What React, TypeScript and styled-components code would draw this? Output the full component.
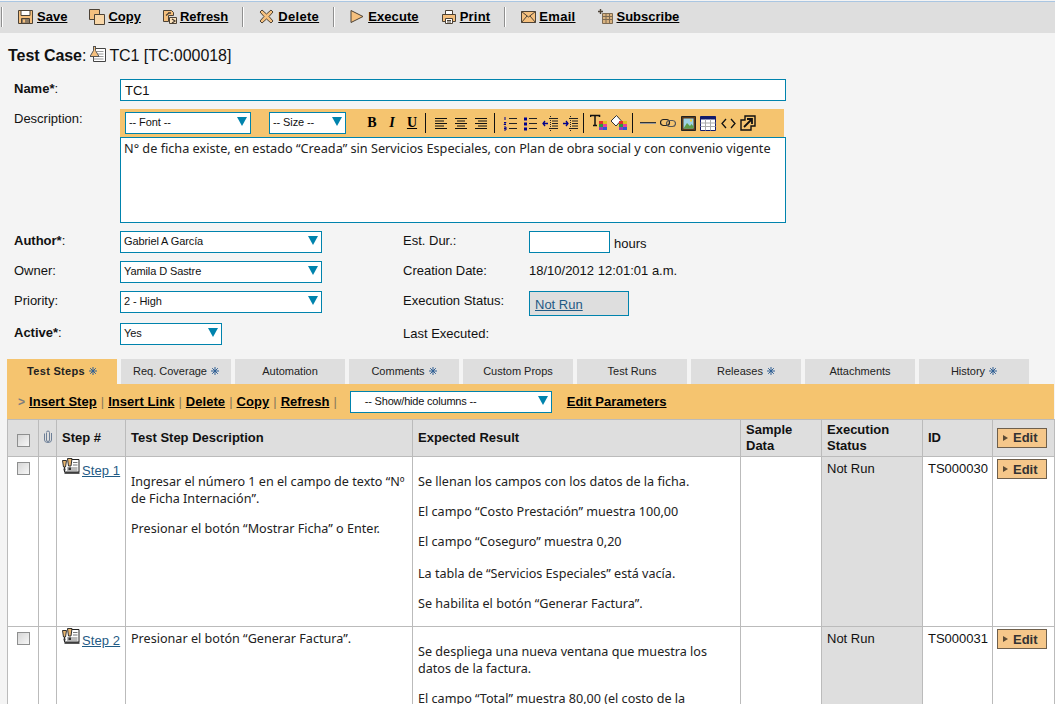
import React from 'react'
import styled, { createGlobalStyle } from 'styled-components'

const GlobalStyle = createGlobalStyle`
  html, body {
    margin: 0;
    padding: 0;
    background: #f4f4f4;
    color: #111;
    font-family: "Liberation Sans", Arial, sans-serif;
    font-size: 13px;
  }
`

const Page = styled.div`
  height: 704px;
  overflow: hidden;
`

const TopBar = styled.div`
  display: flex;
  align-items: center;
  box-sizing: border-box;
  height: 32px;
  margin-top: 1px;
  padding: 0 0 2px 1px;
  border-top: 1px solid #aac6e2;
  background: #dedede;
`

const BarSep = styled.span<{ $first?: boolean }>`
  width: 1px;
  height: 20px;
  margin: ${(p) => (p.$first ? '0 14px 0 0' : '0 15px 0 -8px')};
  background: #8f8f8f;
  border-right: 1px solid #fff;
`

const ToolLink = styled.a<{ $track?: number }>`
  display: flex;
  align-items: center;
  gap: 3px;
  margin-right: 22px;
  color: #000;
  font-size: 13px;
  font-weight: bold;
  letter-spacing: ${(p) => p.$track ?? 0}px;
  span {
    text-decoration: underline;
  }
`

const Title = styled.h1`
  display: flex;
  align-items: center;
  height: 20px;
  margin: 13px 0 13px 8px;
  font-size: 16px;
  font-weight: normal;
  letter-spacing: -0.05px;
  b {
    font-weight: bold;
  }
  svg {
    margin: 0 3px 3px 4px;
  }
`

const NameGrid = styled.div`
  display: grid;
  grid-template-columns: 106px 666px;
  row-gap: 8px;
  margin-left: 14px;
`

const Label = styled.div<{ $top?: number }>`
  padding-top: ${(p) => p.$top ?? 2}px;
  line-height: 15px;
  font-size: 13px;
  b {
    font-weight: bold;
  }
`

const TextInput = styled.input<{ $width?: number }>`
  box-sizing: border-box;
  width: ${(p) => p.$width ?? 666}px;
  height: 22px;
  margin: 0;
  padding: 0 4px;
  border: 1px solid #0083ad;
  border-radius: 0;
  outline: none;
  background: #fff;
  color: #111;
  font-family: "Liberation Sans", Arial, sans-serif;
  font-size: 13px;
`

const EditorBar = styled.div`
  display: flex;
  align-items: center;
  box-sizing: border-box;
  width: 664px;
  height: 28px;
  padding-left: 5px;
  background: #f5c46f;
`

const EditorBox = styled.div`
  box-sizing: border-box;
  width: 666px;
  height: 86px;
  padding: 2px 3px;
  border: 1px solid #0083ad;
  background: #fff;
  color: #222;
  font-family: "Noto Sans", sans-serif;
  font-size: 12.7px;
  line-height: 17px;
`

const SelectBox = styled.div<{ $width: number; $indent?: number }>`
  position: relative;
  box-sizing: border-box;
  flex: none;
  width: ${(p) => p.$width}px;
  height: 22px;
  padding-left: ${(p) => p.$indent ?? 3}px;
  border: 1px solid #0083ad;
  background: #fff;
  color: #111;
  font-size: 11px;
  font-weight: normal;
  letter-spacing: -0.1px;
  line-height: 18px;
  &::after {
    content: '';
    position: absolute;
    right: 3px;
    top: 4px;
    border-style: solid;
    border-width: 9px 5px 0;
    border-color: #0083ad transparent transparent;
  }
`

const EditorSelect = styled(SelectBox)`
  margin-right: 18px;
  &:nth-child(2) {
    margin-right: 16px;
  }
`

const EdButton = styled.span`
  display: flex;
  align-items: center;
  justify-content: center;
  flex: none;
  width: 20px;
  height: 20px;
  color: #000;
  font-family: "Liberation Serif", serif;
  font-size: 14px;
  font-weight: bold;
`

const EdSep = styled.span`
  flex: none;
  width: 1px;
  height: 20px;
  margin: 0 5px 0 3px;
  background: #111;
`

const MetaGrid = styled.div`
  display: grid;
  grid-template-columns: 106px 283px 126px 1fr;
  grid-auto-rows: 22px;
  row-gap: 8px;
  margin: 8px 0 0 14px;
`

const MetaValue = styled.div`
  display: flex;
  align-items: center;
  gap: 4px;
  height: 22px;
`

const DateValue = styled(MetaValue)`
  height: 19px;
`

const HoursText = styled.span`
  padding-top: 2px;
  font-size: 13px;
`

const StatusBox = styled.div`
  box-sizing: border-box;
  width: 100px;
  height: 25px;
  padding: 4px 5px 0;
  border: 1px solid #0083ad;
  background: #dedede;
  line-height: 17px;
`

const ActiveRow = styled.div`
  grid-column: 1 / -1;
  display: grid;
  grid-template-columns: 106px 283px 126px 1fr;
  margin-top: 2px;
`

const DocLink = styled.a`
  color: #1f5a85;
  text-decoration: underline;
`

const Tabs = styled.div`
  display: flex;
  gap: 4px;
  margin: 16px 0 0 7px;
`

const Tab = styled.div<{ $active?: boolean }>`
  display: flex;
  align-items: center;
  justify-content: center;
  gap: 4px;
  box-sizing: border-box;
  width: 110px;
  height: 25px;
  padding-bottom: 2px;
  background: ${(p) => (p.$active ? '#f5c46f' : '#dedede')};
  font-size: 11px;
  font-weight: ${(p) => (p.$active ? 'bold' : 'normal')};
  letter-spacing: ${(p) => (p.$active ? '0.3px' : '0')};
  color: #222;
`

const Panel = styled.div`
  margin: 0 1px 0 7px;
`

const StepBar = styled.div`
  display: flex;
  align-items: center;
  height: 35px;
  padding-left: 11px;
  background: #f5c46f;
  font-size: 13px;
  font-weight: bold;
`

const Chevron = styled.span`
  margin-right: 4px;
  color: #7d7d7d;
  font-size: 12px;
`

const StepAction = styled.a`
  color: #000;
  text-decoration: underline;
  letter-spacing: 0.05px;
`

const Pipe = styled.span`
  margin: 0 4px;
  color: #8a7a5a;
  font-weight: normal;
`

const ColumnSelect = styled(SelectBox)`
  margin: 0 15px 0 9px;
  letter-spacing: -0.2px;
`

const Grid = styled.table`
  width: 1047px;
  border-collapse: collapse;
  table-layout: fixed;
  border-left: 1px solid #bbb;
`

const HeadCell = styled.th`
  height: 36px;
  padding: 0 5px;
  border: 1px solid #bbb;
  background: #dedede;
  font-size: 13px;
  font-weight: bold;
  line-height: 16px;
  text-align: left;
`

const Cell = styled.td<{ $shade?: boolean }>`
  padding: 3px 5px;
  border: 1px solid #bbb;
  background: ${(p) => (p.$shade ? '#dedede' : '#fff')};
  vertical-align: top;
  line-height: 17px;
`

const ProseCell = styled(Cell)`
  color: #222;
  font-family: "Noto Sans", sans-serif;
  font-size: 12.6px;
`

const TightCell = styled(Cell)`
  padding: 1px 0 0;
`

const Para = styled.p<{ $flush?: boolean }>`
  margin: ${(p) => (p.$flush ? '0' : '13px 0')};
  &:nth-child(4) {
    margin-top: 15px;
  }
  &:nth-child(5) {
    margin-bottom: 11px;
  }
`

const Tick = styled.input.attrs({ type: 'checkbox' })`
  appearance: none;
  box-sizing: border-box;
  display: block;
  width: 13px;
  height: 13px;
  margin: 4px auto 0;
  border: 1px solid #8e8f8f;
  background: linear-gradient(135deg, #d6d6d6, #f7f7f7);
`

const StepName = styled.div`
  display: flex;
  align-items: flex-start;
  gap: 2px;
  padding-left: 5px;
  a {
    margin-top: 4px;
    letter-spacing: 0.1px;
  }
`

const EditBtn = styled.button`
  display: flex;
  align-items: center;
  gap: 5px;
  box-sizing: border-box;
  width: 50px;
  height: 20px;
  margin: -1px 0 0 -1px;
  padding: 0 0 0 5px;
  border: 1px solid #6e5f4c;
  background: #f5c78a;
  color: #333;
  font-family: "Liberation Sans", Arial, sans-serif;
  font-size: 13px;
  font-weight: bold;
  &::before {
    content: '';
    border-style: solid;
    border-width: 3px 0 3px 5px;
    border-color: transparent transparent transparent #5a4a35;
  }
`

const tan = '#f5c07e'
const ink = '#4c4236'

const SaveIcon = () => (
  <svg width="17" height="16" viewBox="0 0 17 16">
    <path d="M1.500 1.500h14v13h-14z" fill={tan} stroke={ink} />
    <path d="M4 1.500h9v5H4z" fill="#fff" stroke={ink} />
    <path d="M4.500 14.500v-5h8v5z" fill="#8c7a63" stroke={ink} />
    <path d="M6 10.500h2v3H6z" fill={tan} />
  </svg>
)

const CopyIcon = () => (
  <svg width="16" height="16" viewBox="0 0 16 16">
    <path d="M.5.500h10v10H.5z" fill={tan} stroke={ink} />
    <path d="M5.500 5.500h10v10h-10z" fill="#f9d7a8" stroke={ink} />
  </svg>
)

const RefreshIcon = () => (
  <svg width="14" height="16" viewBox="0 0 14 16">
    <path d="M.5 1.500h8l2 2v3h-5v6h-5z" fill={tan} stroke={ink} />
    <path d="M6.500 8.500h7v6h-7z" fill="#fbe2bc" stroke={ink} />
    <path d="M3 6.500 6.500 3.500M9 10l3 2-3 2M5 4h3" fill="none" stroke={ink} strokeWidth="1.300" />
  </svg>
)

const DeleteIcon = () => (
  <svg width="16" height="15" viewBox="0 0 16 15">
    <path d="M3 1 7.500 5 12 1l2 2-4 4.500 4 4.500-2 2-4.500-4L3 14l-2-2 4-4.500L1 3z" fill={tan} stroke={ink} />
  </svg>
)

const PlayIcon = () => (
  <svg width="15" height="15" viewBox="0 0 15 15">
    <path d="M1 1.500 13 7.500 1 13.500z" fill={tan} stroke={ink} />
  </svg>
)

const PrintIcon = () => (
  <svg width="16" height="16" viewBox="0 0 16 16">
    <path d="M4.500 5V1.500h7V5" fill="#fff" stroke={ink} />
    <path d="M1.500 5.500h13v7h-13z" fill={tan} stroke={ink} />
    <path d="M4.500 9.500h7v5h-7z" fill="#fff" stroke={ink} />
    <path d="M6 11.500h4M6 13h4" stroke={ink} />
  </svg>
)

const MailIcon = () => (
  <svg width="15" height="14" viewBox="0 0 15 14">
    <path d="M.5 1.500h14v11H.5z" fill={tan} stroke={ink} />
    <path d="M.5 1.500 7.500 7l7-5.500M.5 12.500 6 6M14.500 12.500 9 6" fill="none" stroke={ink} />
  </svg>
)

const FeedIcon = () => (
  <svg width="16" height="16" viewBox="0 0 16 16">
    <path d="M4.500 4.500h10v10h-10z" fill="#d9b380" stroke="#7d6a52" />
    <path d="M4.500 7.500h10M4.500 10.500h10M8 4.500v10M11.500 4.500v10" stroke="#7d6a52" />
    <path d="M2.500 0v5M0 2.500h5" stroke={ink} strokeWidth="1.400" />
  </svg>
)

const CaseIcon = () => (
  <svg width="16" height="17" viewBox="0 0 16 17">
    <path d="M3.500 2.500h12v13h-12z" fill="#fff" stroke="#444" />
    <path d="M6.500 5.500h7M8 8h5.500M9 10.500h4.500M3.500 13h10" stroke="#999" />
    <path d="M3 .5h3M3.500 .5v4L0 10.500h9L5.500 4.500V.5z" fill={tan} stroke="#555" />
  </svg>
)

const StepIcon = () => (
  <svg width="18" height="16" viewBox="0 0 18 16">
    <path d="M5 1.500h12v12.500H2.500V9" fill="#fff" stroke="#222" />
    <path d="M2.500 15h15" stroke="#222" strokeWidth="1.500" />
    <path d="M11 4.500h4.500M11 7h4.500M5 10h10.500M5 12h10.500" stroke="#777" />
    <path d="M.5 2.500h4L3.500 9h-2z" fill="#e9b66f" stroke="#333" />
    <path d="M5.500.5h4.500L9 8H6.500z" fill="#e9b66f" stroke="#333" />
    <path d="M1.500 10.500h2v2h-2zM6.500 9.500h2.500v2.500H6.500z" fill="#333" />
  </svg>
)

const ClipIcon = () => (
  <svg width="8" height="13" viewBox="0 0 8 13">
    <path d="M2.500 3v7a1.500 1.500 0 0 0 3 0V2.500a1.500 1.500 0 0 0-3 0M.5 3.500V10a3.500 2.500 0 0 0 7 0V3" fill="none" stroke="#6d7f97" />
  </svg>
)

const TabMark = () => (
  <svg width="8" height="8" viewBox="0 0 8 8">
    <path d="M4 0v8M0 4h8M1.200 1.200l5.600 5.600M6.800 1.200 1.200 6.800" stroke="#2f5f94" strokeWidth="1" />
  </svg>
)

const lineSets: Record<string, number[][]> = {
  left: [[1, 13], [1, 10], [1, 13], [1, 10], [1, 13]],
  center: [[1, 13], [3, 11], [1, 13], [3, 11], [1, 13]],
  right: [[1, 13], [4, 13], [1, 13], [4, 13], [1, 13]],
}

const AlignIcon = ({ kind }: { kind: string }) => (
  <svg width="14" height="13" viewBox="0 0 14 13">
    {lineSets[kind].map(([a, b], i) => (
      <path key={i} d={`M${a} ${1.5 + i * 2.5}H${b}`} stroke="#111" />
    ))}
  </svg>
)

const ListIcon = ({ numbered }: { numbered?: boolean }) => (
  <svg width="15" height="15" viewBox="0 0 15 15">
    {numbered ? (
      <path d="M2 1v3M1 6.500h2l-2 2h2M1 11h2v3H1M1 12.500h2" fill="none" stroke="#00008b" />
    ) : (
      <path d="M1 1.500h3v3H1zM1 6.500h3v3H1zM1 11.500h3v3H1z" fill="#00008b" />
    )}
    <path d="M6 2.500h8M6 7.500h8M6 12.500h8" stroke="#222" />
  </svg>
)

const IndentIcon = ({ out }: { out?: boolean }) => (
  <svg width="17" height="17" viewBox="0 0 17 17">
    <path d="M7 3.500h9M10 6h6M10 8.500h6M10 11h6M7 13.500h9" stroke="#222" />
    <path d="M8.500 1v15" stroke="#222" strokeDasharray="1 1" />
    <path d={out ? 'M6 8.500H1M3 6 1 8.500 3 11' : 'M1 8.500h5M4 6l2 2.500L4 11'} fill="none" stroke="#00008b" strokeWidth="1.300" />
  </svg>
)

const Palette = () => (
  <>
    <path d="M9 7h4v3H9z" fill="#e0312c" />
    <path d="M13 7h4v3h-4z" fill="#e0c020" />
    <path d="M9 10h4v3H9z" fill="#2e9b3c" />
    <path d="M13 10h4v3h-4z" fill="#e5409a" />
    <path d="M9 13h4v3H9z" fill="#8c3fc0" />
    <path d="M13 13h4v3h-4z" fill="#2a5bd0" />
  </>
)

const FontColorIcon = () => (
  <svg width="18" height="18" viewBox="0 0 18 18">
    <path d="M.5 3V1.500h9V3M5 1.500v10M3 11.500h4" fill="none" stroke="#111" strokeWidth="1.500" />
    <Palette />
  </svg>
)

const FillColorIcon = () => (
  <svg width="18" height="18" viewBox="0 0 18 18">
    <path d="M6.500 1.500 11 6.500 6 12 1 7z" fill="#fff" stroke="#333" />
    <Palette />
  </svg>
)

const RuleIcon = () => (
  <svg width="16" height="4" viewBox="0 0 16 4">
    <path d="M0 1.500h16" stroke="#333" />
    <path d="M0 2.500h16" stroke="#999" />
  </svg>
)

const LinkIcon = () => (
  <svg width="16" height="10" viewBox="0 0 16 10">
    <rect x=".5" y="1.500" width="9" height="6" rx="3" fill="none" stroke="#222" strokeWidth="1.200" />
    <rect x="6.500" y="2.500" width="9" height="6" rx="3" fill="none" stroke="#555" strokeWidth="1.200" />
  </svg>
)

const ImageIcon = () => (
  <svg width="15" height="15" viewBox="0 0 15 15">
    <path d="M.5.500h14v14H.5z" fill="#5b3a1a" stroke="#222" />
    <path d="M2.500 2.500h10v10h-10z" fill="#9fd4e6" />
    <path d="M2.500 12.500 6 7l3 3 1.500-2 2 2.500v2z" fill="#5e9e4a" />
    <path d="M9 3.500h2v2H9z" fill="#f2d23c" />
  </svg>
)

const TableIcon = () => (
  <svg width="16" height="15" viewBox="0 0 16 15">
    <path d="M.5.500h15v14H.5z" fill="#fff" stroke="#111a6b" />
    <path d="M.5.500h15v3H.5z" fill="#111a6b" />
    <path d="M.5 7h15M.5 10.500h15M5.500 3.500v11M10.500 3.500v11" stroke="#aaa" />
  </svg>
)

const CodeIcon = () => (
  <svg width="15" height="11" viewBox="0 0 15 11">
    <path d="M5 1 1 5.500 5 10M10 1l4 4.500L10 10" fill="none" stroke="#111" strokeWidth="1.300" />
  </svg>
)

const FullIcon = () => (
  <svg width="16" height="16" viewBox="0 0 16 16">
    <path d="M5 1h10v10h-4v4H1V5h4z" fill="none" stroke="#111" strokeWidth="1.400" />
    <path d="M4 12 12 4M7 4h5v5" fill="none" stroke="#111" strokeWidth="1.800" />
  </svg>
)

const tools = [
  { label: 'Save', icon: <SaveIcon /> },
  { label: 'Copy', icon: <CopyIcon /> },
  { label: 'Refresh', icon: <RefreshIcon /> },
  { sep: true },
  { label: 'Delete', icon: <DeleteIcon />, track: 0.3 },
  { sep: true },
  { label: 'Execute', icon: <PlayIcon />, track: 0.1 },
  { label: 'Print', icon: <PrintIcon />, track: 0.2 },
  { sep: true },
  { label: 'Email', icon: <MailIcon />, track: 0.3 },
  { label: 'Subscribe', icon: <FeedIcon /> },
]

const tabs = [
  { label: 'Test Steps', mark: true, active: true },
  { label: 'Req. Coverage', mark: true },
  { label: 'Automation' },
  { label: 'Comments', mark: true },
  { label: 'Custom Props' },
  { label: 'Test Runs' },
  { label: 'Releases', mark: true },
  { label: 'Attachments' },
  { label: 'History', mark: true },
]

const colWidths = [31, 18, 69, 287, 328, 81, 101, 70, 62]

const steps = [
  {
    name: 'Step 1',
    id: 'TS000030',
    description: [
      'Ingresar el número 1 en el campo de texto “Nº de Ficha Internación”.',
      'Presionar el botón “Mostrar Ficha” o Enter.',
    ],
    flush: false,
    expected: [
      'Se llenan los campos con los datos de la ficha.',
      'El campo “Costo Prestación” muestra 100,00',
      'El campo “Coseguro” muestra 0,20',
      'La tabla de “Servicios Especiales” está vacía.',
      'Se habilita el botón “Generar Factura”.',
    ],
  },
  {
    name: 'Step 2',
    id: 'TS000031',
    description: ['Presionar el botón “Generar Factura”.'],
    flush: true,
    expected: [
      'Se despliega una nueva ventana que muestra los datos de la factura.',
      'El campo “Total” muestra 80,00 (el costo de la',
    ],
  },
]

export default function App() {
  return (
    <Page>
      <GlobalStyle />
      <TopBar>
        <BarSep $first />
        {tools.map((t, i) =>
          t.sep ? (
            <BarSep key={i} />
          ) : (
            <ToolLink key={i} $track={t.track}>
              {t.icon}
              <span>{t.label}</span>
            </ToolLink>
          ),
        )}
      </TopBar>

      <Title>
        <b>Test Case</b>:
        <CaseIcon />
        TC1 [TC:000018]
      </Title>

      <NameGrid>
        <Label>
          <b>Name*</b>:
        </Label>
        <TextInput defaultValue="TC1" />
        <Label>Description:</Label>
        <div>
          <EditorBar>
            <EditorSelect $width={126}>-- Font --</EditorSelect>
            <EditorSelect $width={77}>-- Size --</EditorSelect>
            <EdButton>B</EdButton>
            <EdButton as="i">I</EdButton>
            <EdButton as="u">U</EdButton>
            <EdSep />
            <EdButton><AlignIcon kind="left" /></EdButton>
            <EdButton><AlignIcon kind="center" /></EdButton>
            <EdButton><AlignIcon kind="right" /></EdButton>
            <EdSep />
            <EdButton><ListIcon numbered /></EdButton>
            <EdButton><ListIcon /></EdButton>
            <EdButton><IndentIcon out /></EdButton>
            <EdButton><IndentIcon /></EdButton>
            <EdSep />
            <EdButton><FontColorIcon /></EdButton>
            <EdButton><FillColorIcon /></EdButton>
            <EdSep />
            <EdButton><RuleIcon /></EdButton>
            <EdButton><LinkIcon /></EdButton>
            <EdButton><ImageIcon /></EdButton>
            <EdButton><TableIcon /></EdButton>
            <EdButton><CodeIcon /></EdButton>
            <EdButton><FullIcon /></EdButton>
          </EditorBar>
          <EditorBox>
            N° de ficha existe, en estado “Creada” sin Servicios Especiales, con Plan de obra social y con convenio vigente
          </EditorBox>
        </div>
      </NameGrid>

      <MetaGrid>
        <Label><b>Author*</b>:</Label>
        <SelectBox $width={202}>Gabriel A García</SelectBox>
        <Label>Est. Dur.:</Label>
        <MetaValue>
          <TextInput $width={81} />
          <HoursText>hours</HoursText>
        </MetaValue>

        <Label>Owner:</Label>
        <SelectBox $width={202}>Yamila D Sastre</SelectBox>
        <Label>Creation Date:</Label>
        <DateValue>18/10/2012 12:01:01 a.m.</DateValue>

        <Label>Priority:</Label>
        <SelectBox $width={202}>2 - High</SelectBox>
        <Label>Execution Status:</Label>
        <StatusBox>
          <DocLink>Not Run</DocLink>
        </StatusBox>

        <ActiveRow>
          <Label><b>Active*</b>:</Label>
          <SelectBox $width={102}>Yes</SelectBox>
          <Label $top={3}>Last Executed:</Label>
        </ActiveRow>
      </MetaGrid>

      <Tabs>
        {tabs.map((t) => (
          <Tab key={t.label} $active={t.active}>
            {t.label}
            {t.mark && <TabMark />}
          </Tab>
        ))}
      </Tabs>

      <Panel>
        <StepBar>
          <Chevron>&gt;</Chevron>
          <StepAction>Insert Step</StepAction>
          <Pipe>|</Pipe>
          <StepAction>Insert Link</StepAction>
          <Pipe>|</Pipe>
          <StepAction>Delete</StepAction>
          <Pipe>|</Pipe>
          <StepAction>Copy</StepAction>
          <Pipe>|</Pipe>
          <StepAction>Refresh</StepAction>
          <Pipe>|</Pipe>
          <ColumnSelect $width={202} $indent={14}>-- Show/hide columns --</ColumnSelect>
          <StepAction>Edit Parameters</StepAction>
        </StepBar>

        <Grid>
          <colgroup>
            {colWidths.map((w, i) => (
              <col key={i} width={w} />
            ))}
          </colgroup>
          <thead>
            <tr>
              <HeadCell><Tick /></HeadCell>
              <HeadCell><ClipIcon /></HeadCell>
              <HeadCell>Step #</HeadCell>
              <HeadCell>Test Step Description</HeadCell>
              <HeadCell>Expected Result</HeadCell>
              <HeadCell>Sample Data</HeadCell>
              <HeadCell>Execution Status</HeadCell>
              <HeadCell>ID</HeadCell>
              <HeadCell><EditBtn>Edit</EditBtn></HeadCell>
            </tr>
          </thead>
          <tbody>
            {steps.map((s) => (
              <tr key={s.id}>
                <TightCell><Tick /></TightCell>
                <Cell />
                <TightCell>
                  <StepName>
                    <StepIcon />
                    <DocLink>{s.name}</DocLink>
                  </StepName>
                </TightCell>
                <ProseCell>
                  {s.description.map((d, i) => (
                    <Para key={i} $flush={s.flush}>{d}</Para>
                  ))}
                </ProseCell>
                <ProseCell>
                  {s.expected.map((d, i) => (
                    <Para key={i}>{d}</Para>
                  ))}
                </ProseCell>
                <Cell />
                <Cell $shade>Not Run</Cell>
                <Cell>{s.id}</Cell>
                <Cell><EditBtn>Edit</EditBtn></Cell>
              </tr>
            ))}
          </tbody>
        </Grid>
      </Panel>
    </Page>
  )
}
